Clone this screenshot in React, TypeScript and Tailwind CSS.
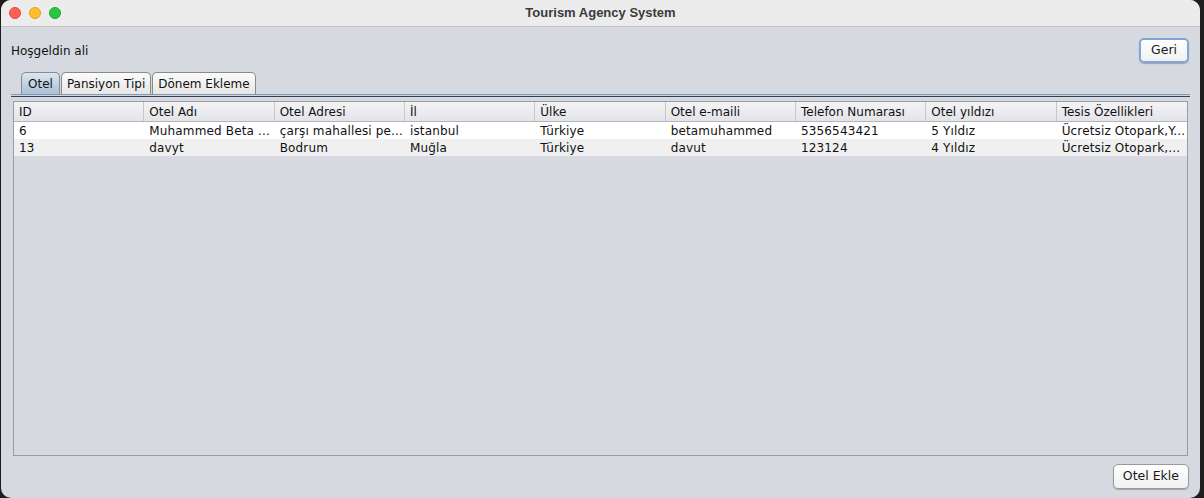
const COLUMNS = [
  "ID",
  "Otel Adı",
  "Otel Adresi",
  "İl",
  "Ülke",
  "Otel e-maili",
  "Telefon Numarası",
  "Otel yıldızı",
  "Tesis Özellikleri",
];

const ROWS = [
  ["6", "Muhammed Beta ...", "çarşı mahallesi pe...", "istanbul", "Türkiye", "betamuhammed", "5356543421", "5 Yıldız", "Ücretsiz Otopark,Y..."],
  ["13", "davyt", "Bodrum", "Muğla", "Türkiye", "davut", "123124", "4 Yıldız", "Ücretsiz Otopark,..."],
];

const TABS = ["Otel", "Pansiyon Tipi", "Dönem Ekleme"];

function AquaButton({ label, focused }: { label: string; focused?: boolean }) {
  return (
    <button
      className={`h-[25px] rounded-[5px] bg-gradient-to-b from-white to-[#f0f0f0] text-[12.5px] text-[#1a1a1a] shadow-[0_1px_1px_rgba(0,0,0,0.25)] ${
        focused ? "px-[10px] border-2 border-[#7ea7d8]" : "px-[9px] border border-[#9a9a9a]"
      }`}
    >
      {label}
    </button>
  );
}

export default function App() {
  return (
    <div
      className="w-[1204px] h-[498px] bg-[#1e1e1e] overflow-hidden"
      style={{ fontFamily: '"DejaVu Sans", "Liberation Sans", sans-serif' }}
    >
      <div className="ml-[1px] w-[1199px] h-[498px] rounded-[10px] overflow-hidden bg-[#d6d9e0] flex flex-col">
        {/* title bar */}
        <div className="h-[27px] shrink-0 bg-[#ececec] border-b border-[#c4c4c4] flex items-center relative">
          <div className="flex gap-[8px] pl-[8px]">
            <span className="w-[12px] h-[12px] rounded-full bg-[#fe5f57] border border-[#e2463f]" />
            <span className="w-[12px] h-[12px] rounded-full bg-[#febc2e] border border-[#e1a116]" />
            <span className="w-[12px] h-[12px] rounded-full bg-[#28c840] border border-[#1aab29]" />
          </div>
          <div
            className="absolute inset-0 flex items-center justify-center text-[13px] font-bold text-[#3b3b3b]"
            style={{ fontFamily: '"Liberation Sans", Arial, sans-serif' }}
          >
            Tourism Agency System
          </div>
        </div>

        {/* top row */}
        <div className="flex items-center justify-between pl-[10px] pr-[11px] pt-[11px]">
          <span className="text-[12px] text-[#111]">Hoşgeldin ali</span>
          <AquaButton label="Geri" focused />
        </div>

        {/* tabs */}
        <div className="pl-[10px] pr-[10px] mt-[9px]">
          <div className="flex pl-[10px] h-[22px] items-end">
            {TABS.map((t, i) => (
              <div
                key={t}
                className={`h-[22px] flex items-center text-[12px] text-[#111] border border-b-0 border-[#8a8a8a] rounded-t-[5px] ${
                  i === 0
                    ? "px-[6px] bg-gradient-to-b from-[#dce6f0] to-[#a9c0d7]"
                    : "px-[5px] bg-gradient-to-b from-[#fbfbfb] to-[#e6e6e6] ml-[1px]"
                }`}
              >
                {t}
              </div>
            ))}
          </div>
          <div className="h-[1px] bg-[#8b98a8]" />
          <div className="h-[1px] bg-[#c9d6e4]" />
          <div className="h-[1px] bg-[#2f4257]" />
        </div>

        {/* table */}
        <div className="mx-[12px] mt-[4px] h-[355px] border border-[#9a9ca2] bg-[#d6d9e0] flex flex-col">
          <div className="grid grid-cols-9 h-[20px] bg-gradient-to-b from-[#f4f4f6] to-[#e3e4e8] border-b border-[#b5b6bb]">
            {COLUMNS.map((c, i) => (
              <div
                key={c}
                className={`flex items-center pl-[5px] text-[12px] text-[#111] whitespace-nowrap overflow-hidden ${
                  i < COLUMNS.length - 1 ? "border-r border-[#c6c7cc]" : ""
                }`}
              >
                {c}
              </div>
            ))}
          </div>
          {ROWS.map((r, ri) => (
            <div
              key={ri}
              className={`grid grid-cols-9 h-[17px] ${ri === 0 ? "bg-white" : "bg-[#f0f0f0]"}`}
            >
              {r.map((v, ci) => (
                <div
                  key={ci}
                  className="flex items-center pl-[5px] text-[12px] tracking-[0.15px] text-[#111] whitespace-nowrap"
                >
                  {v}
                </div>
              ))}
            </div>
          ))}
        </div>

        {/* bottom */}
        <div className="flex justify-end pr-[11px] mt-[8px]">
          <AquaButton label="Otel Ekle" />
        </div>
      </div>
    </div>
  );
}
